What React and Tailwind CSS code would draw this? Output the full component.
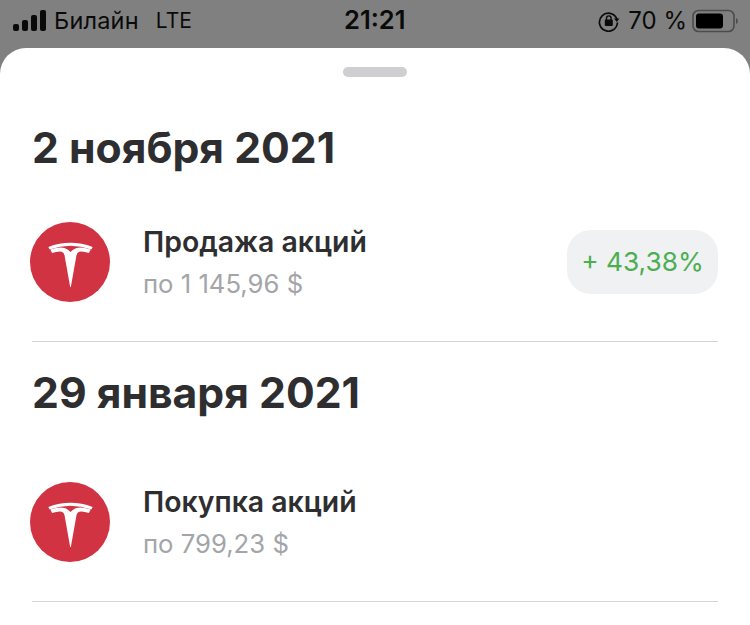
const font = { fontFamily: '"Inter", "Liberation Sans", sans-serif' };

function SignalBars() {
  return (
    <svg width="34" height="22" viewBox="0 0 34 22" fill="#0a0a0a">
      <rect x="0" y="14" width="6" height="7" rx="2" />
      <rect x="9" y="10" width="6" height="11" rx="2" />
      <rect x="18" y="5" width="6" height="16" rx="2" />
      <rect x="27" y="0" width="6" height="21" rx="2" />
    </svg>
  );
}

function RotationLock() {
  return (
    <svg width="22" height="22" viewBox="0 0 22 22" fill="none">
      <path d="M18.6 8.4A9 9 0 1 0 19.4 13" stroke="#0a0a0a" strokeWidth="1.7" strokeLinecap="round" />
      <path d="M16 8.5h5.5l-2.7 3.6z" fill="#0a0a0a" />
      <rect x="6.8" y="9.5" width="8" height="6.5" rx="1" fill="#0a0a0a" />
      <path d="M8.5 10V8.2a2.3 2.3 0 0 1 4.6 0V10" stroke="#0a0a0a" strokeWidth="1.4" />
    </svg>
  );
}

function Battery() {
  return (
    <svg width="46" height="24" viewBox="0 0 46 24" fill="none">
      <rect x="1" y="1.5" width="41" height="21" rx="5.5" stroke="#4c4c4c" strokeWidth="1.6" />
      <rect x="4" y="4.5" width="27" height="15" rx="3" fill="#000" />
      <path d="M44 9c1.2.6 1.8 1.8 1.8 3s-.6 2.4-1.8 3z" fill="#4c4c4c" />
    </svg>
  );
}

function TeslaLogo() {
  return (
    <div className="w-20 h-20 rounded-full bg-[#d13343] flex items-center justify-center shrink-0">
      <svg width="47" height="47" viewBox="80 95 140 140" fill="#ffffff" className="mt-[5px]">
        <path d="M84 113Q150 88 216 113L212 120Q150 98 88 120Z" />
        <path d="M90 120Q118 112 132 116Q144 120 150 128Q156 120 168 116Q182 112 210 120L205 131Q188 125 176 127Q168 130 167 142L151 232H149L133 142Q132 130 124 127Q112 125 95 131Z" />
      </svg>
    </div>
  );
}

function Row({ title, sub, badge }) {
  return (
    <div className="border-b border-[#d4d4d6] h-[142px] -mt-px">
      <div className="flex items-center h-full pb-[18px]">
        <div className="-ml-0.5"><TeslaLogo /></div>
        <div className="ml-[33px] flex-1 pt-[3px]">
          <div className="text-[28.4px] leading-8 font-semibold text-[#2e2e30]">{title}</div>
          <div className="mt-[10px] text-[25.7px] leading-8 text-[#a3a5a9]">{sub}</div>
        </div>
        {badge && (
          <div className="w-[151px] h-16 rounded-[24px] bg-[#eff1f2] flex items-center justify-center text-[26.3px] text-[#4cae50]">
            {badge}
          </div>
        )}
      </div>
    </div>
  );
}

export default function App() {
  return (
    <div style={font} className="w-[750px] h-[625px] overflow-hidden bg-[#808080] flex flex-col">
      <div className="h-12 shrink-0 flex items-center justify-between pl-[13px] pr-[12px] pb-[7px] text-[#0a0a0a] relative">
        <div className="flex items-center">
          <SignalBars />
          <span className="ml-[7px] text-[23.5px] tracking-[0.2px]">Билайн</span>
          <span className="ml-[17px] text-[21px]">LTE</span>
        </div>
        <div className="absolute left-[344px] text-[25.5px] font-semibold">21:21</div>
        <div className="flex items-center">
          <RotationLock />
          <span className="ml-[8px] mr-[5px] text-[24px]">70 %</span>
          <Battery />
        </div>
      </div>
      <div className="flex-1 bg-white rounded-t-[26px] px-8">
        <div className="flex justify-center pt-[19px]">
          <div className="w-16 h-2.5 rounded-full bg-[#cfcfd1]" />
        </div>
        <h1 className="mt-[43px] text-[42.7px] leading-[56px] font-bold text-[#2e2e30]">2 ноября 2021</h1>
        <div className="mt-[25px]">
          <Row title="Продажа акций" sub="по 1 145,96 $" badge="+ 43,38%" />
        </div>
        <h1 className="mt-[23px] text-[42.7px] leading-[56px] font-bold text-[#2e2e30]">29 января 2021</h1>
        <div className="mt-[40px]">
          <Row title="Покупка акций" sub="по 799,23 $" />
        </div>
      </div>
    </div>
  );
}
